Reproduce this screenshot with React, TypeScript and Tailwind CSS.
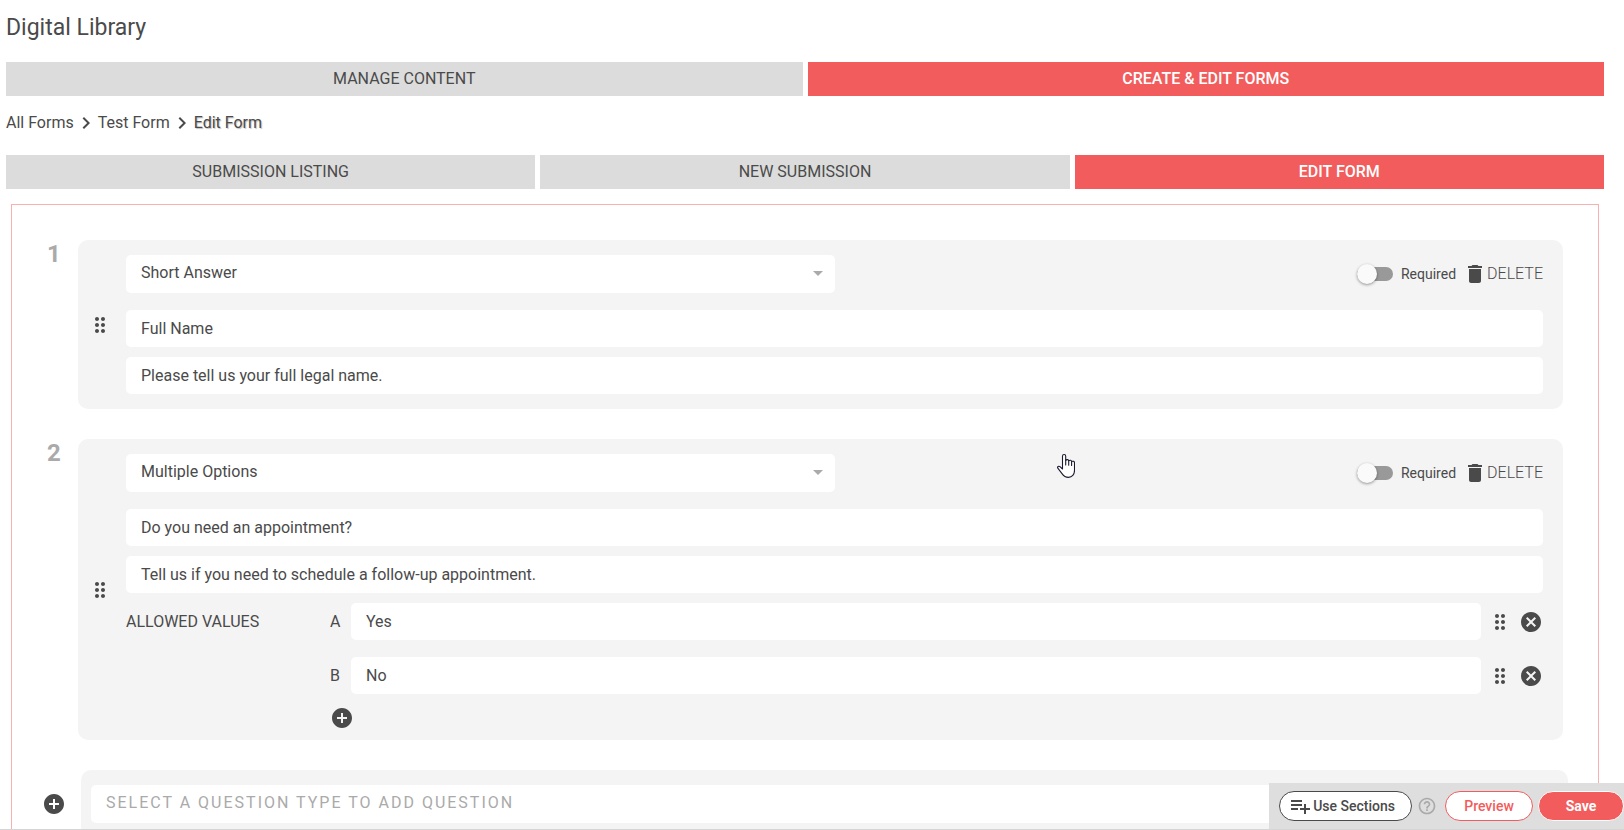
import React from "react";
import {
  MdAddCircle,
  MdArrowDropDown,
  MdCancel,
  MdChevronRight,
  MdDelete,
  MdDragIndicator,
  MdHelpOutline,
  MdPlaylistAdd,
} from "react-icons/md";

const QUESTION_TYPES = ["Short Answer", "Multiple Options"];

type Question = {
  type: string;
  title: string;
  description: string;
  values?: string[];
};

const QUESTIONS: Question[] = [
  {
    type: "Short Answer",
    title: "Full Name",
    description: "Please tell us your full legal name.",
  },
  {
    type: "Multiple Options",
    title: "Do you need an appointment?",
    description: "Tell us if you need to schedule a follow-up appointment.",
    values: ["Yes", "No"],
  },
];

function Tabs({ items, active, label }: { items: string[]; active: string; label: string }) {
  return (
    <nav aria-label={label} className="flex gap-[5px]">
      {items.map((item) => (
        <button
          key={item}
          type="button"
          className={
            item === active
              ? "h-[34px] flex-1 bg-[#f25c5c] font-medium text-white uppercase"
              : "h-[34px] flex-1 bg-[#dcdcdc] uppercase"
          }
        >
          {item}
        </button>
      ))}
    </nav>
  );
}

function TextField({ value, label }: { value: string; label: string }) {
  return (
    <input
      type="text"
      aria-label={label}
      defaultValue={value}
      className="block h-[37px] w-full min-w-0 rounded-[5px] bg-white px-[15px] outline-none"
    />
  );
}

function DragHandle() {
  return (
    <button type="button" aria-label="Reorder" className="block shrink-0">
      <MdDragIndicator size={24} />
    </button>
  );
}

function TypeSelect({ value }: { value: string }) {
  return (
    <div className="relative w-1/2">
      <select
        aria-label="Question type"
        defaultValue={value}
        className="block h-[38px] w-full appearance-none rounded-[5px] bg-white px-[15px] pb-0.5 outline-none"
      >
        {QUESTION_TYPES.map((type) => (
          <option key={type}>{type}</option>
        ))}
      </select>
      <MdArrowDropDown size={24} className="pointer-events-none absolute top-1.5 right-[5px] text-[#aaaaaa]" />
    </div>
  );
}

function RequiredToggle() {
  return (
    <label className="flex cursor-pointer items-center gap-2 text-sm">
      <span className="relative block h-5 w-9">
        <input type="checkbox" className="peer sr-only" />
        <span className="absolute top-[3px] left-0 h-3.5 w-9 rounded-full bg-[#999999]" />
        <span className="absolute top-0 left-0 size-5 rounded-full bg-[#fafafa] shadow-[0_1px_3px_rgba(0,0,0,0.4)] peer-checked:left-4" />
      </span>
      Required
    </label>
  );
}

function QuestionCard({ question, index }: { question: Question; index: number }) {
  return (
    <li className="flex">
      <div className="w-12 pt-0.5 text-center text-2xl leading-6 font-bold text-[#aaaaaa]">{index + 1}</div>
      <section className="flex flex-1 items-center rounded-[10px] bg-[#f4f4f4] py-[15px] pr-5 pl-2.5">
        <DragHandle />
        <div className="ml-3.5 min-w-0 flex-1">
          <div className="mb-[17px] flex items-center justify-between">
            <TypeSelect value={question.type} />
            <div className="flex items-center gap-[7px]">
              <RequiredToggle />
              <button type="button" className="flex items-center font-light">
                <MdDelete size={24} />
                DELETE
              </button>
            </div>
          </div>
          <div className="flex flex-col gap-2.5">
            <TextField label="Question" value={question.title} />
            <TextField label="Description" value={question.description} />
          </div>
          {question.values && (
            <div className="mt-2.5 flex">
              <div className="w-[204px] shrink-0 leading-[37px]">ALLOWED VALUES</div>
              <div className="flex-1">
                <ul className="flex flex-col gap-[17px]">
                  {question.values.map((value, i) => (
                    <li key={value} className="flex items-center">
                      <span className="w-[21px] shrink-0">{String.fromCharCode(65 + i)}</span>
                      <TextField label={"Allowed value " + (i + 1)} value={value} />
                      <div className="ml-[7px] flex shrink-0 items-center gap-[7px]">
                        <DragHandle />
                        <button type="button" aria-label="Remove value">
                          <MdCancel size={24} />
                        </button>
                      </div>
                    </li>
                  ))}
                </ul>
                <button type="button" aria-label="Add value" className="mt-3 -mb-[5px] block">
                  <MdAddCircle size={24} />
                </button>
              </div>
            </div>
          )}
        </div>
      </section>
    </li>
  );
}

export default function App() {
  return (
    <div className="relative flex h-screen flex-col overflow-hidden border-b border-[#d5d5d5] bg-white font-[Roboto,sans-serif] text-base text-[#4a4a4a]">
      <main className="flex-1 overflow-y-auto pr-5 pl-1.5 [scrollbar-width:none]">
        <h1 className="pt-3 pb-[18px] text-[23px] leading-8">Digital Library</h1>
        <Tabs label="Library" items={["Manage Content", "Create & Edit Forms"]} active="Create & Edit Forms" />

        <nav aria-label="Breadcrumb" className="flex h-[59px] items-center pb-1.5">
          <a href="#forms">All Forms</a>
          <MdChevronRight size={24} />
          <a href="#test-form">Test Form</a>
          <MdChevronRight size={24} />
          <span aria-current="page" className="[text-shadow:1px_1px_1px_rgba(0,0,0,0.25)]">
            Edit Form
          </span>
        </nav>

        <Tabs label="Form" items={["Submission Listing", "New Submission", "Edit Form"]} active="Edit Form" />

        <div className="mx-[5px] mt-[15px] border border-[#f8b0b0] pt-[35px] pb-10 pl-[18px]">
          <ol className="flex flex-col gap-[30px] pr-[35px]">
            {QUESTIONS.map((question, index) => (
              <QuestionCard key={question.title} question={question} index={index} />
            ))}
          </ol>
          <div className="mt-[30px] flex items-center gap-[3px] pr-[30px]">
            <button type="button" aria-label="Add question" className="flex w-12 justify-center">
              <MdAddCircle size={24} />
            </button>
            <div className="flex-1 rounded-[10px] bg-[#f4f4f4] px-2.5 py-[15px]">
              <select
                aria-label="New question type"
                defaultValue=""
                className="block h-[38px] w-full appearance-none rounded-[5px] bg-white px-[15px] pb-0.5 tracking-[2px] text-[#aaaaaa] outline-none"
              >
                <option value="">SELECT A QUESTION TYPE TO ADD QUESTION</option>
                {QUESTION_TYPES.map((type) => (
                  <option key={type}>{type}</option>
                ))}
              </select>
            </div>
          </div>
        </div>
      </main>

      <footer className="absolute right-0 -bottom-px flex h-[47px] items-center bg-[#dedede] pb-px pl-2.5 text-sm font-medium">
        <button
          type="button"
          className="flex h-[30px] items-center gap-px rounded-full border border-[#4a4a4a] bg-white pr-4 pl-2"
        >
          <MdPlaylistAdd size={24} />
          Use Sections
        </button>
        <button type="button" aria-label="Help" className="mr-2 ml-[5px] text-[#aaaaaa]">
          <MdHelpOutline size={20} />
        </button>
        <button
          type="button"
          className="h-[30px] w-[88px] rounded-full border border-[#f25c5c] bg-white text-[#f25c5c]"
        >
          Preview
        </button>
        <button
          type="button"
          className="ml-[5px] h-[30px] w-[86px] rounded-full border border-white bg-[#f25c5c] font-bold text-white"
        >
          Save
        </button>
      </footer>

      {/* Hand pointer */}
      <svg aria-hidden="true" viewBox="0 0 18 24" className="pointer-events-none absolute top-[454px] left-[1057px] h-6 w-[18px]">
        <path
          d="M5.5 15V2.200c0-2.200 3.200-2.200 3.200 0V6.200C10 5.200 11.400 5.500 11.700 6.700C12.900 5.900 14.300 6.200 14.600 7.500C16 6.800 17.500 7.300 17.500 9V16.500C17.500 20.500 15 23.400 11.500 23.400C8.500 23.400 6.800 22.300 5 19.600L.8 14.200C0 12.600 1.800 11.800 3 12.700Z"
          fill="#fff"
          stroke="#1b1b30"
          strokeWidth="1.1"
          strokeLinejoin="round"
        />
        <path d="M8.700 6v5M11.700 6.700v4.500M14.600 7.500v4" fill="none" stroke="#1b1b30" strokeWidth="1.1" strokeLinecap="round" />
      </svg>
    </div>
  );
}
